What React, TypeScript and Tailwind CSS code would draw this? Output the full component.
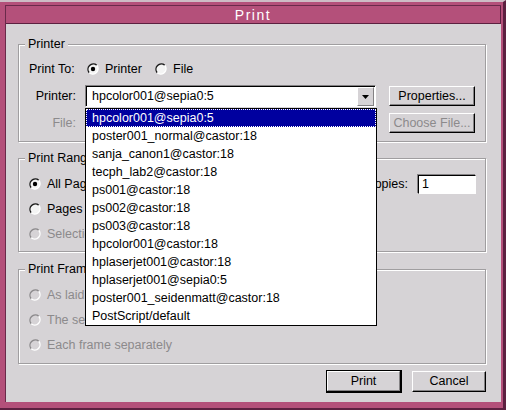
import React from "react";

function Radio({ checked = false, disabled = false }: { checked?: boolean; disabled?: boolean }) {
  return (
    <svg width="12" height="12" viewBox="0 0 12 12" className="shrink-0">
      <circle cx="6" cy="6" r="5.2" fill={disabled ? "#d6d3d6" : "#f4f4f4"} />
      <path d="M2.2 9.8 A5.4 5.4 0 0 1 9.8 2.2" fill="none" stroke={disabled ? "#8c8a8c" : "#1a1a1a"} strokeWidth="1.4" />
      <path d="M9.8 2.2 A5.4 5.4 0 0 1 2.2 9.8" fill="none" stroke="#ffffff" strokeWidth="1.4" />
      {checked && <circle cx="6" cy="6" r="2.2" fill="#000" />}
    </svg>
  );
}

function RadioOpt({ label, checked = false, disabled = false, w }: { label: string; checked?: boolean; disabled?: boolean; w?: string }) {
  return (
    <div className={`flex items-center h-[18px] ${w ?? ""}`}>
      <Radio checked={checked} disabled={disabled} />
      <span className={`ml-[6px] ${disabled ? "text-[#8c8a8c]" : "text-black"}`}>{label}</span>
    </div>
  );
}

function Group({ label, className, children }: { label: string; className: string; children?: React.ReactNode }) {
  return (
    <div className={`relative border border-[#a09ea0] shadow-[inset_1px_1px_0_#ffffff,1px_1px_0_#ffffff] ${className}`}>
      <span className="absolute left-[6px] top-[-8px] bg-[#d6d3d6] px-[3px] leading-[14px] text-black">{label}</span>
      {children}
    </div>
  );
}

const printers = [
  "hpcolor001@sepia0:5",
  "poster001_normal@castor:18",
  "sanja_canon1@castor:18",
  "tecph_lab2@castor:18",
  "ps001@castor:18",
  "ps002@castor:18",
  "ps003@castor:18",
  "hpcolor001@castor:18",
  "hplaserjet001@castor:18",
  "hplaserjet001@sepia0:5",
  "poster001_seidenmatt@castor:18",
  "PostScript/default",
];

export default function App() {
  return (
    <div className="w-[506px] h-[410px] bg-[#b4507a] border-t-[2px] border-t-[#cdbcc5] border-r-[3px] border-r-[#5c2040] border-b-[2px] border-b-[#5c2040] pt-[3px] pl-[5px] pr-[2px] pb-[6px] font-['Liberation_Sans',Arial,sans-serif] text-[12.5px] leading-[15px] text-black">
      <div className="w-full h-full flex flex-col border-l border-t border-[#6a2a4a] bg-[#d6d3d6]">
        <div className="h-[18px] shrink-0 bg-[#b4507a] border-b border-r border-[#5c2040] flex items-center justify-center">
          <span className="text-white text-[14px] tracking-[1.5px] leading-[16px]">Print</span>
        </div>
        <div className="flex-1 flex flex-col pl-[12px] pr-[15px]">
          {/* Printer group */}
          <Group label="Printer" className="mt-[20px] h-[98px] shrink-0">
            <div className="flex flex-col pl-[10px]">
              <div className="mt-[15px] h-[18px] flex items-center">
                <span className="w-[58px]">Print To:</span>
                <RadioOpt label="Printer" checked w="w-[68px]" />
                <RadioOpt label="File" />
              </div>
              <div className="mt-[7px] h-[22px] flex items-center">
                <span className="w-[47px] text-right">Printer:</span>
                <div className="relative ml-[9px] w-[291px] h-[22px] bg-white border border-t-[#848284] border-l-[#848284] border-r-white border-b-white shadow-[inset_1px_1px_0_#000]">
                  <div className="h-full flex items-center justify-between pl-[6px] pr-[1px]">
                    <span>hpcolor001@sepia0:5</span>
                    <div className="w-[17px] h-[19px] mt-[1px] bg-[#d6d3d6] border border-t-white border-l-white border-r-[#848284] border-b-[#848284] flex items-center justify-center">
                      <svg width="7" height="4" viewBox="0 0 7 4"><polygon points="0,0 7,0 3.5,4" fill="#000" /></svg>
                    </div>
                  </div>
                  <div className="absolute left-[-1px] top-[22px] z-10 w-[292px] h-[218px] bg-white border border-black flex flex-col">
                    {printers.map((p, i) => (
                      <div
                        key={p}
                        className={`h-[18px] shrink-0 flex items-center pl-[6px] whitespace-nowrap ${i === 0 ? "bg-[#00009f] text-white outline outline-1 outline-dotted outline-white -outline-offset-1" : "text-black"}`}
                      >
                        {p}
                      </div>
                    ))}
                  </div>
                </div>
                <div className="ml-[13px] w-[86px] h-[20px] border border-t-white border-l-white border-r-black border-b-black shadow-[inset_-1px_-1px_0_#848284] flex items-center justify-center">
                  Properties...
                </div>
              </div>
              <div className="mt-[6px] h-[20px] flex items-center">
                <span className="w-[47px] text-right text-[#8c8a8c]">File:</span>
                <div className="ml-[313px] w-[86px] h-[20px] border border-t-white border-l-white border-r-black border-b-black shadow-[inset_-1px_-1px_0_#848284] flex items-center justify-center text-[#8c8a8c]">
                  Choose File...
                </div>
              </div>
            </div>
          </Group>

          {/* Print Range */}
          <Group label="Print Range" className="mt-[16px] h-[94px] shrink-0">
            <div className="flex flex-col gap-[7px] pl-[10px] pr-[9px] pt-[16px]">
              <div className="flex items-center justify-between h-[18px]">
                <RadioOpt label="All Pages" checked />
                <div className="flex items-center">
                  <span>Number of copies:</span>
                  <div className="ml-[10px] w-[58px] h-[19px] bg-white border border-t-black border-l-black border-r-white border-b-white shadow-[-1px_-1px_0_#848284] flex items-center pl-[3px]">
                    1
                  </div>
                </div>
              </div>
              <RadioOpt label="Pages" />
              <RadioOpt label="Selection" disabled />
            </div>
          </Group>

          {/* Print Frames */}
          <Group label="Print Frames" className="mt-[17px] h-[95px] shrink-0">
            <div className="flex flex-col gap-[7px] pl-[10px] pt-[16px]">
              <RadioOpt label="As laid out on the screen" disabled />
              <RadioOpt label="The selected frame" disabled />
              <RadioOpt label="Each frame separately" disabled />
            </div>
          </Group>

          {/* Buttons */}
          <div className="mt-[6px] flex items-center justify-end gap-[10px]">
            <div className="w-[76px] h-[23px] border border-black border-r-2 border-b-2 flex">
              <div className="flex-1 border border-t-white border-l-white border-r-[#848284] border-b-[#848284] flex items-center justify-center">
                Print
              </div>
            </div>
            <div className="w-[74px] h-[21px] border border-t-white border-l-white border-r-black border-b-black shadow-[inset_-1px_-1px_0_#848284] flex items-center justify-center">
              Cancel
            </div>
          </div>
        </div>
      </div>
    </div>
  );
}
